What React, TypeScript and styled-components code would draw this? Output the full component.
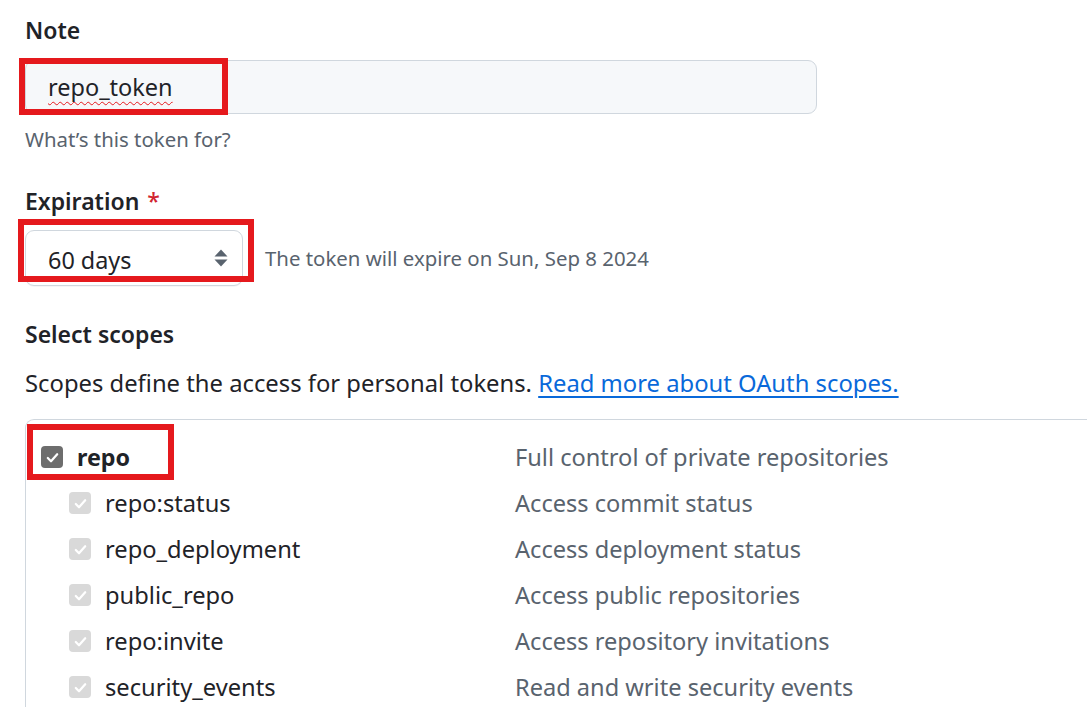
import React from "react";
import styled, { createGlobalStyle } from "styled-components";

const GlobalStyle = createGlobalStyle`
  html, body { margin: 0; padding: 0; background: #ffffff; }
  body {
    font-family: "Noto Sans", "Open Sans", sans-serif;
    color: #1f2328;
    -webkit-font-smoothing: antialiased;
  }
`;

const Page = styled.div`
  width: 1087px;
  height: 707px;
  overflow: hidden;
  box-sizing: border-box;
  padding: 15px 0 0 25px;
`;

const Label = styled.div<{ $gap?: number }>`
  font-size: 23px;
  font-weight: 600;
  line-height: 30px;
  height: 30px;
  margin-top: ${(p) => p.$gap ?? 0}px;
  white-space: nowrap;
`;

const Star = styled.span`
  color: #d1242f;
  margin-left: 8px;
  font-weight: 500;
`;

const Annotation = styled.div<{ $l: number; $t: number; $w: number; $h: number }>`
  position: absolute;
  left: ${(p) => p.$l}px;
  top: ${(p) => p.$t}px;
  width: ${(p) => p.$w}px;
  height: ${(p) => p.$h}px;
  box-sizing: border-box;
  border: 6px solid #e5191d;
  pointer-events: none;
`;

const TextField = styled.div`
  position: relative;
  margin-top: 15px;
  width: 792px;
  height: 54px;
  box-sizing: border-box;
  border: 1px solid #d0d7de;
  border-radius: 9px;
  background: #f6f8fa;
  padding-left: 22px;
  display: flex;
  align-items: center;
  font-size: 23.5px;
`;

const Misspelled = styled.span`
  text-decoration: underline wavy #e5191d;
  text-decoration-thickness: 1px;
  text-decoration-skip-ink: none;
  text-underline-offset: 5px;
`;

const Hint = styled.div<{ $gap?: number }>`
  font-size: 20.4px;
  line-height: 30px;
  color: #59636e;
  margin-top: ${(p) => p.$gap ?? 0}px;
  white-space: nowrap;
`;

const ExpirationRow = styled.div`
  display: flex;
  align-items: center;
  gap: 22px;
  margin-top: 14px;
`;

const SelectBox = styled.div`
  position: relative;
  width: 218px;
  height: 56px;
  box-sizing: border-box;
  border: 1px solid #d0d7de;
  border-radius: 9px;
  background: #ffffff;
  padding: 0 14px 0 22px;
  display: flex;
  align-items: center;
  justify-content: space-between;
  font-size: 23.4px;
  box-shadow: 0 1px 0 rgba(31, 35, 40, 0.04);
`;

const SelectValue = styled.span`
  padding-top: 4px;
`;

const Description = styled.div`
  margin-top: 19px;
  font-size: 23.8px;
  line-height: 30px;
  white-space: nowrap;
`;

const Link = styled.a`
  color: #0969da;
  text-decoration: underline;
  text-underline-offset: 4px;
  text-decoration-thickness: 2px;
`;

const ScopeTable = styled.div`
  position: relative;
  margin-top: 21px;
  width: 1200px;
  border-top: 1px solid #d0d7de;
  border-left: 1px solid #d0d7de;
  border-top-left-radius: 9px;
  padding-top: 14px;
`;

const ScopeRow = styled.div`
  display: grid;
  grid-template-columns: 489px 1fr;
  height: 46px;
  align-items: center;
  font-size: 23.6px;
  white-space: nowrap;
`;

const ScopeName = styled.div<{ $child?: boolean }>`
  display: flex;
  align-items: center;
  gap: 14px;
  padding-left: ${(p) => (p.$child ? 43 : 15)}px;
  font-weight: ${(p) => (p.$child ? 400 : 700)};
  font-size: ${(p) => (p.$child ? 23.7 : 23.3)}px;
`;

const ScopeDesc = styled.div`
  color: #59636e;
`;

const Check = styled.span<{ $disabled?: boolean }>`
  width: 22px;
  height: 22px;
  border-radius: 4px;
  background: ${(p) => (p.$disabled ? "#d9d9d9" : "#6d6d6d")};
  display: inline-flex;
  align-items: center;
  justify-content: center;
  flex: none;
`;

const CheckMark = () => (
  <svg width="15" height="15" viewBox="0 0 16 16" aria-hidden="true">
    <path d="M3 8.6 L6.4 12 L13 4.6" fill="none" stroke="#ffffff" strokeWidth="2.4" strokeLinecap="round" strokeLinejoin="round" />
  </svg>
);

const Arrows = () => (
  <svg width="14" height="18" viewBox="0 0 14 18" aria-hidden="true">
    <path d="M7 0.5 L13.5 7.5 L0.5 7.5 Z" fill="#59636e" />
    <path d="M0.5 10.5 L13.5 10.5 L7 17.5 Z" fill="#59636e" />
  </svg>
);

const scopes = [
  { name: "repo:status", desc: "Access commit status" },
  { name: "repo_deployment", desc: "Access deployment status" },
  { name: "public_repo", desc: "Access public repositories" },
  { name: "repo:invite", desc: "Access repository invitations" },
  { name: "security_events", desc: "Read and write security events" },
];

export default function App() {
  return (
    <Page>
      <GlobalStyle />
      <Label>Note</Label>
      <TextField>
        <Misspelled>repo_token</Misspelled>
        <Annotation $l={-7} $t={-3} $w={209} $h={57} />
      </TextField>
      <Hint $gap={10}>What’s this token for?</Hint>

      <Label $gap={32}>
        Expiration<Star>*</Star>
      </Label>
      <ExpirationRow>
        <SelectBox>
          <SelectValue>60 days</SelectValue>
          <Arrows />
          <Annotation $l={-8} $t={-12} $w={236} $h={63} />
        </SelectBox>
        <Hint>The token will expire on Sun, Sep 8 2024</Hint>
      </ExpirationRow>

      <Label $gap={33}>Select scopes</Label>
      <Description>
        Scopes define the access for personal tokens.{" "}
        <Link href="#">Read more about OAuth scopes.</Link>
      </Description>

      <ScopeTable>
        <ScopeRow>
          <ScopeName>
            <Check>
              <CheckMark />
            </Check>
            repo
          </ScopeName>
          <ScopeDesc>Full control of private repositories</ScopeDesc>
        </ScopeRow>
        {scopes.map((s) => (
          <ScopeRow key={s.name}>
            <ScopeName $child>
              <Check $disabled>
                <CheckMark />
              </Check>
              {s.name}
            </ScopeName>
            <ScopeDesc>{s.desc}</ScopeDesc>
          </ScopeRow>
        ))}
        <Annotation $l={1} $t={4} $w={147} $h={56} />
      </ScopeTable>
    </Page>
  );
}
